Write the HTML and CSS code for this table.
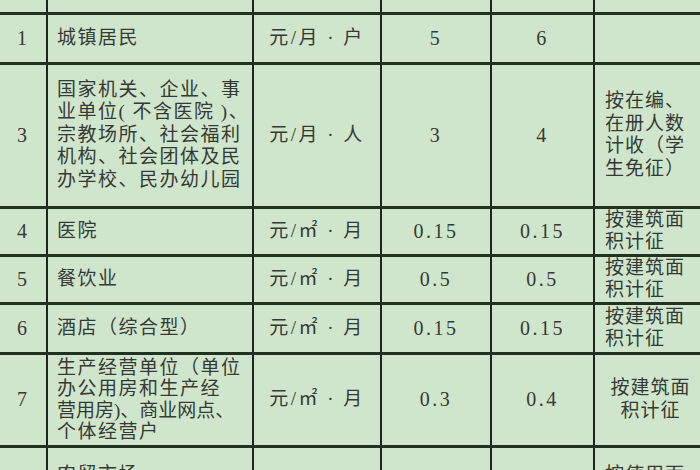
FILE: index.html
```html
<!DOCTYPE html>
<html lang="zh-CN">
<head>
<meta charset="utf-8">
<title>收费标准表</title>
<link rel="stylesheet" href="styles.css">
</head>
<body>
<div class="sheet">
  <table class="fee">
    <colgroup>
      <col class="c-no">
      <col class="c-obj">
      <col class="c-unit">
      <col class="c-old">
      <col class="c-new">
      <col class="c-note">
    </colgroup>
    <tr class="r-head">
      <td></td>
      <td></td>
      <td></td>
      <td></td>
      <td></td>
      <td></td>
    </tr>
    <tr class="r-1">
      <td class="num">1</td>
      <td class="obj">城镇居民</td>
      <td class="mid">元/月 · 户</td>
      <td class="mid val">5</td>
      <td class="mid val">6</td>
      <td class="note"></td>
    </tr>
    <tr class="r-3">
      <td class="num">3</td>
      <td class="obj">国家机关、企业、事<br>业单位( 不含医院 )、<br>宗教场所、社会福利<br>机构、社会团体及民<br>办学校、民办幼儿园</td>
      <td class="mid">元/月 · 人</td>
      <td class="mid val">3</td>
      <td class="mid val">4</td>
      <td class="note">按在编、<br>在册人数<br>计收（学<br>生免征）</td>
    </tr>
    <tr class="r-4">
      <td class="num">4</td>
      <td class="obj">医院</td>
      <td class="mid">元/㎡ · 月</td>
      <td class="mid val">0.15</td>
      <td class="mid val">0.15</td>
      <td class="note">按建筑面<br>积计征</td>
    </tr>
    <tr class="r-5">
      <td class="num">5</td>
      <td class="obj">餐饮业</td>
      <td class="mid">元/㎡ · 月</td>
      <td class="mid val">0.5</td>
      <td class="mid val">0.5</td>
      <td class="note">按建筑面<br>积计征</td>
    </tr>
    <tr class="r-6">
      <td class="num">6</td>
      <td class="obj">酒店（综合型）</td>
      <td class="mid">元/㎡ · 月</td>
      <td class="mid val">0.15</td>
      <td class="mid val">0.15</td>
      <td class="note">按建筑面<br>积计征</td>
    </tr>
    <tr class="r-7">
      <td class="num">7</td>
      <td class="obj tight">生产经营单位（单位<br>办公用房和生产经<br><span class="squeeze">营用房)、商业网点、</span><br>个体经营户</td>
      <td class="mid">元/㎡ · 月</td>
      <td class="mid val">0.3</td>
      <td class="mid val">0.4</td>
      <td class="note center">按建筑面<br>积计征</td>
    </tr>
    <tr class="r-8">
      <td class="num">8</td>
      <td class="obj">农贸市场<br>集贸市场</td>
      <td class="mid">元/㎡ · 月</td>
      <td class="mid val">0.3</td>
      <td class="mid val">0.4</td>
      <td class="note">按使用面<br>积计征</td>
    </tr>
  </table>
</div>
</body>
</html>
```

FILE: styles.css
```css
html, body {
  margin: 0;
  padding: 0;
  background: #d0e6cc;
}

.sheet {
  width: 700px;
  height: 470px;
  overflow: hidden;
  background: #d0e6cc;
}

.fee {
  border-collapse: collapse;
  table-layout: fixed;
  width: 710px;
  margin-top: -37px;
  margin-left: -4px;
  font-family: "Liberation Serif", "Noto Sans CJK SC", serif;
  font-size: 19px;
  color: #363a36;
}

.c-no { width: 50px; }
.c-obj { width: 206px; }
.c-unit { width: 128px; }
.c-old { width: 110px; }
.c-new { width: 103px; }
.c-note { width: 113px; }

.fee td {
  border-left: 2px solid #1c261c;
  border-right: 2px solid #1c261c;
  border-top: 3px solid #223222;
  border-bottom: 3px solid #223222;
  padding: 0;
  vertical-align: middle;
  line-height: 22.5px;
  overflow: hidden;
  white-space: nowrap;
}

.fee tr:first-child td { border-top: none; }

.r-head { height: 50px; }
.r-1 { height: 50px; }
.r-3 { height: 144px; }
.r-4 { height: 48px; }
.r-5 { height: 48px; }
.r-6 { height: 50px; }
.r-7 { height: 93px; }
.r-8 { height: 80px; }

.num {
  text-align: center;
  font-size: 20px;
}

.obj {
  padding-left: 9px !important;
  letter-spacing: 1.5px;
}

.obj.tight {
  line-height: 21.5px;
}

.squeeze {
  letter-spacing: 0;
}

.mid {
  text-align: center;
  letter-spacing: 2.5px;
}

.val {
  font-size: 20px;
  letter-spacing: 2.5px;
}

.note {
  padding-left: 10px !important;
  letter-spacing: 1px;
}

.note.center {
  padding-left: 0 !important;
  text-align: center;
}
```
